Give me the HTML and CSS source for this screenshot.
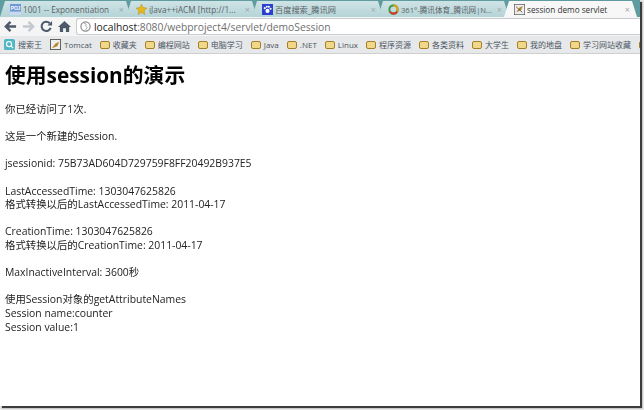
FILE: index.html
```html
<!DOCTYPE html>
<html lang="zh">
<head>
<meta charset="utf-8">
<title>session demo servlet</title>
<link rel="stylesheet" href="styles.css">
</head>
<body>
<div class="window">
  <div class="tabs">
    <div class="tab">
      <svg class="fav" viewBox="0 0 16 16"><rect width="16" height="16" fill="#6f97d8"/><rect y="11" width="16" height="5" fill="#c8d8f0"/><text x="8" y="9" font-size="7" font-weight="700" text-anchor="middle" fill="#fff" font-family="Liberation Sans">POJ</text></svg>
      <span class="tab-title">1001 -- Exponentiation</span><span class="x">×</span>
    </div>
    <div class="tab">
      <svg class="fav" viewBox="0 0 16 16"><path d="M8 0l2.400 5.200 5.600.7-4.100 3.800 1.100 5.600L8 12.500l-5 2.800 1.100-5.600L0 5.900l5.600-.7z" fill="#e8b720" stroke="#a88a20" stroke-width=".6"/></svg>
      <span class="tab-title">iJava++iACM [http://1...</span><span class="x">×</span>
    </div>
    <div class="tab">
      <svg class="fav" viewBox="0 0 16 16"><rect width="16" height="16" fill="#2b3fcf"/><circle cx="8" cy="10" r="3" fill="#fff"/><circle cx="4" cy="6" r="1.500" fill="#fff"/><circle cx="7" cy="4" r="1.500" fill="#fff"/><circle cx="10" cy="4" r="1.500" fill="#fff"/><circle cx="12.500" cy="7" r="1.500" fill="#fff"/></svg>
      <span class="tab-title">百度搜索_腾讯网</span><span class="x">×</span>
    </div>
    <div class="tab">
      <svg class="fav" viewBox="0 0 16 16"><circle cx="8" cy="8" r="6" fill="none" stroke="#3d9a4a" stroke-width="3"/><path d="M8 2a6 6 0 0 1 5.200 9" fill="none" stroke="#e0a020" stroke-width="3"/><path d="M13.200 11A6 6 0 0 1 3 11.300" fill="none" stroke="#d43a2a" stroke-width="3"/></svg>
      <span class="tab-title narrow">361°-腾讯体育_腾讯网|N...</span><span class="x">×</span>
    </div>
    <div class="tab active">
      <svg class="fav" viewBox="0 0 16 16"><rect x=".5" y=".5" width="15" height="15" fill="#eee" stroke="#555"/><path d="M3 12l5-7 5-2-3 6z" fill="#b8862a"/><path d="M3 4l9 8" stroke="#333"/></svg>
      <span class="tab-title">session demo servlet</span><span class="x">×</span>
    </div>
  </div>
  <div class="toolbar">
    <svg class="nav" viewBox="0 0 14 14"><path d="M7 2L2 7l5 5M2 7h11" fill="none" stroke="#4d5a6b" stroke-width="2.600"/></svg>
    <svg class="nav" viewBox="0 0 14 14"><path d="M7 2l5 5-5 5M12 7H1" fill="none" stroke="#c3c9d0" stroke-width="2.600"/></svg>
    <svg class="nav" viewBox="0 0 14 14"><path d="M11.500 8.500A5 5 0 1 1 10.500 3.500" fill="none" stroke="#4d5a6b" stroke-width="2.200"/><path d="M8 6h5V1z" fill="#4d5a6b"/></svg>
    <svg class="nav" viewBox="0 0 14 14"><path d="M7 1L0 7.500h2V13h3.500V9h3v4H12V7.500h2z" fill="#4d5a6b"/></svg>
    <div class="omnibox">
      <svg class="globe" viewBox="0 0 12 12"><circle cx="6" cy="6" r="5" fill="none" stroke="#8a8a8a" stroke-width="1.300"/><path d="M4 2.500l3 1-1 2 2 1.500-2 3" fill="none" stroke="#aaa"/></svg>
      <span class="host">localhost</span><span class="path">:8080/webproject4/servlet/demoSession</span>
    </div>
  </div>
  <div class="bookmarks">
    <span class="bm"><svg class="bi" viewBox="0 0 12 12"><rect width="12" height="12" rx="2" fill="#4fb8c4"/><circle cx="5.500" cy="5.500" r="2.800" fill="none" stroke="#fff" stroke-width="1.300"/><path d="M7.500 7.500l2.500 2.500" stroke="#fff" stroke-width="1.300"/></svg>搜索王</span>
    <span class="bm"><svg class="bi" viewBox="0 0 12 12"><rect x=".5" y=".5" width="11" height="11" fill="#eee" stroke="#555"/><path d="M2 10l4-5 4-2-2 5z" fill="#b8862a"/></svg>Tomcat</span>
    <span class="bm"><i class="folder"></i>收藏夹</span>
    <span class="bm"><i class="folder"></i>编程网站</span>
    <span class="bm"><i class="folder"></i>电脑学习</span>
    <span class="bm"><i class="folder"></i>Java</span>
    <span class="bm"><i class="folder"></i>.NET</span>
    <span class="bm"><i class="folder"></i>Linux</span>
    <span class="bm"><i class="folder"></i>程序资源</span>
    <span class="bm"><i class="folder"></i>各类资料</span>
    <span class="bm"><i class="folder"></i>大学生</span>
    <span class="bm"><i class="folder"></i>我的地盘</span>
    <span class="bm"><i class="folder"></i>学习网站收藏</span>
    <span class="bm"><i class="folder"></i></span>
  </div>
  <main class="content">
    <h1>使用session的演示</h1>
    <p>你已经访问了1次.</p>
    <p>这是一个新建的Session.</p>
    <p>jsessionid: 75B73AD604D729759F8FF20492B937E5</p>
    <p>LastAccessedTime: 1303047625826<br>格式转换以后的LastAccessedTime: 2011-04-17</p>
    <p>CreationTime: 1303047625826<br>格式转换以后的CreationTime: 2011-04-17</p>
    <p>MaxInactiveInterval: 3600秒</p>
    <p>使用Session对象的getAttributeNames<br>Session name:counter<br>Session value:1</p>
  </main>
</div>
</body>
</html>
```
FILE: styles.css
```css
* { box-sizing: border-box; }
html, body { margin: 0; height: 100%; background: #e6e6e6; overflow: hidden; }
body { font-family: "Open Sans", "Noto Sans CJK SC", sans-serif; }
.window { height: 406px; width: 640px; background: #fff; display: flex; flex-direction: column; box-shadow: 2px 2px 1px #3c3c3c; overflow: hidden; filter: blur(.3px); }
.tabs { display: flex; height: 17px; background: #5f9c9f; padding-top: 1px; flex: none; }
.tab { display: flex; align-items: center; height: 16px; width: 131px; margin-right: -5px; padding: 0 7px 0 10px; background: linear-gradient(#cfe3e5, #b4d4d7); clip-path: polygon(5px 0, 126px 0, 131px 100%, 0 100%); font-size: 8.200px; color: #5a6266; white-space: nowrap; }
.tab.active { background: #f7f7f7; color: #333; width: 133px; clip-path: polygon(5px 0, 128px 0, 133px 100%, 0 100%); }
.fav { width: 11px; height: 11px; flex: none; margin-right: 2px; }
.tab-title { flex: 1; min-width: 0; overflow: hidden; }
.narrow { font-size: 7.600px; }
.x { color: #a0a8aa; font-size: 9px; flex: none; }
.toolbar { display: flex; align-items: center; height: 19px; gap: 5px; padding: 0 0 0 4px; background: #f5f5f5; flex: none; }
.nav { width: 13px; height: 13px; flex: none; }
.omnibox { display: flex; align-items: center; flex: 1; height: 17px; background: #fff; border: 1px solid #c9cccf; border-right: 0; border-radius: 3px 0 0 3px; padding-left: 3px; font-size: 10.3px; }
.globe { width: 11px; height: 11px; margin-right: 3px; flex: none; }
.host { color: #222; }
.path { color: #6f6f6f; }
.bookmarks { display: flex; align-items: center; gap: 8px; height: 18px; padding-left: 4px; background: #e7e8ea; border-bottom: 1px solid #cfcfcf; font-size: 8px; color: #4a5563; overflow: hidden; white-space: nowrap; flex: none; }
.bm { display: flex; align-items: center; gap: 3px; flex: none; }
.bi { width: 11px; height: 11px; }
.folder { display: block; width: 10px; height: 8px; border: 1px solid #a57f27; border-radius: 2px; background: #f1d78a; }
.content { padding: 7px 5px; font-size: 10.4px; line-height: 13.6px; color: #222; }
h1 { font-size: 20.8px; line-height: 28px; margin: 0 0 14px; color: #000; font-weight: 700; }
p { margin: 0 0 13.600px; }
```
